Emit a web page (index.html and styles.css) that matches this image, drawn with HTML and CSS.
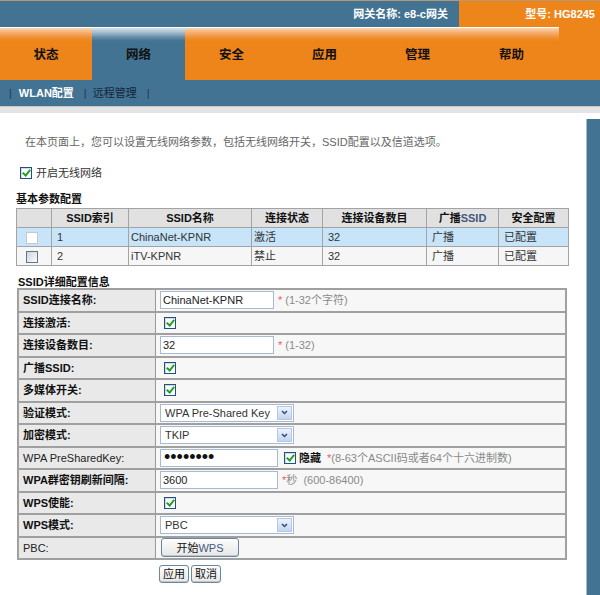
FILE: index.html
```html
<!DOCTYPE html>
<html lang="zh-CN">
<head>
<meta charset="utf-8">
<title>WLAN配置</title>
<link rel="stylesheet" href="styles.css">
</head>
<body>
<header class="top">
  <div class="gw">网关名称: e8-c网关</div>
  <div class="model">型号: HG8245</div>
</header>
<nav class="tabs">
  <a class="tab">状态</a>
  <a class="tab active">网络</a>
  <a class="tab">安全</a>
  <a class="tab">应用</a>
  <a class="tab">管理</a>
  <a class="tab">帮助</a>
</nav>
<nav class="subnav">
  <span class="sep">|</span><a class="sub cur">WLAN配置</a><span class="sep">|</span><a class="sub">远程管理</a><span class="sep">|</span>
</nav>
<div class="band"></div>
<div class="main">
  <div class="content">
    <p class="intro">在本页面上，您可以设置无线网络参数，包括无线网络开关，SSID配置以及信道选项。</p>
    <div class="enable"><span class="cb on"></span><span>开启无线网络</span></div>
    <h3 class="title">基本参数配置</h3>
    <table class="list">
      <colgroup>
        <col class="c1"><col class="c2"><col class="c3"><col class="c4"><col class="c5"><col class="c6"><col class="c7">
      </colgroup>
      <tr class="head"><th></th><th>SSID索引</th><th>SSID名称</th><th>连接状态</th><th>连接设备数目</th><th>广播<span class="sl">SSID</span></th><th>安全配置</th></tr>
      <tr class="sel-row"><td class="chk"><span class="cb lite"></span></td><td>1</td><td class="tight">ChinaNet-KPNR</td><td class="tight">激活</td><td>32</td><td>广播</td><td>已配置</td></tr>
      <tr class="plain"><td class="chk"><span class="cb off"></span></td><td>2</td><td class="tight">iTV-KPNR</td><td class="tight">禁止</td><td>32</td><td>广播</td><td>已配置</td></tr>
    </table>
    <h3 class="title t2">SSID详细配置信息</h3>
    <div class="form">
      <div class="k">SSID连接名称:</div>
      <div class="v"><input class="txt" value="ChinaNet-KPNR"><span class="req">*</span><span class="hint">(1-32个字符)</span></div>

      <div class="k">连接激活:</div>
      <div class="v"><span class="cb on ind"></span></div>

      <div class="k">连接设备数目:</div>
      <div class="v"><input class="txt" value="32"><span class="req">*</span><span class="hint">(1-32)</span></div>

      <div class="k">广播SSID:</div>
      <div class="v"><span class="cb on ind"></span></div>

      <div class="k">多媒体开关:</div>
      <div class="v"><span class="cb on ind"></span></div>

      <div class="k">验证模式:</div>
      <div class="v"><div class="sel"><span class="val">WPA Pre-Shared Key</span><span class="arr"><svg width="7" height="5" viewBox="0 0 7 5"><path d="M1 1 L3.5 3.5 L6 1" fill="none" stroke="#2c4c8c" stroke-width="1.5"/></svg></span></div></div>

      <div class="k">加密模式:</div>
      <div class="v"><div class="sel"><span class="val">TKIP</span><span class="arr"><svg width="7" height="5" viewBox="0 0 7 5"><path d="M1 1 L3.5 3.5 L6 1" fill="none" stroke="#2c4c8c" stroke-width="1.5"/></svg></span></div></div>

      <div class="k n">WPA PreSharedKey:</div>
      <div class="v"><input class="txt w pw" value="••••••••"><span class="cb on gap"></span><b class="hide">隐藏</b><span class="req far">*</span><span class="hint tight">(8-63个ASCII码或者64个十六进制数)</span></div>

      <div class="k">WPA群密钥刷新间隔:</div>
      <div class="v"><input class="txt w" value="3600"><span class="req">*</span><span class="hint tight">秒&nbsp;&nbsp;(600-86400)</span></div>

      <div class="k">WPS使能:</div>
      <div class="v"><span class="cb on ind"></span></div>

      <div class="k">WPS模式:</div>
      <div class="v"><div class="sel"><span class="val">PBC</span><span class="arr"><svg width="7" height="5" viewBox="0 0 7 5"><path d="M1 1 L3.5 3.5 L6 1" fill="none" stroke="#2c4c8c" stroke-width="1.5"/></svg></span></div></div>

      <div class="k n">PBC:</div>
      <div class="v"><button class="btn wps">开始<span class="sl">WPS</span></button></div>
    </div>
    <div class="actions"><button class="btn">应用</button><button class="btn">取消</button></div>
  </div>
  <div class="rail"></div>
</div>
</body>
</html>
```
FILE: styles.css
```css
* { box-sizing: border-box; }
html, body { margin: 0; padding: 0; }
body {
  width: 600px;
  height: 595px;
  overflow: hidden;
  background: #fff;
  font-family: "Liberation Sans", "Noto Sans CJK SC", sans-serif;
  font-size: 11px;
  line-height: 14px;
  color: #222;
}

/* header */
.top { display: flex; height: 27px; border-top: 1px solid #b7997a; }
.gw, .model { color: #fff; font-weight: bold; text-align: right; line-height: 26px; }
.gw { width: 459px; background: #437393; padding-right: 11px; }
.model { flex: 1; background: #ee851b; padding-right: 5px; }

/* main tabs */
.tabs {
  display: grid;
  grid-template-columns: 92px repeat(4, 93px) 95px;
  height: 53px;
  background: #ee851b;
}
.tab {
  display: flex;
  align-items: center;
  justify-content: center;
  padding-top: 3px;
  font-size: 12.5px;
  font-weight: bold;
  color: #111;
  background: linear-gradient(#fff 0, #fff 1px, #f9d4b1 1px, #f4ac6c 6px, #ef8e2c 11px, #ee851b 14px);
}
.tab.active {
  background: linear-gradient(#fff 0, #fff 1px, #d7e2ea 1px, #9db7c9 6px, #5a85a2 11px, #437393 14px);
}

/* sub nav */
.subnav { display: flex; align-items: center; height: 26px; background: #437393; padding-left: 9px; }
.sep { color: #2d2b6c; }
.sub { margin: 0 10px 0 7px; color: #15253a; }
.sub + .sep + .sub { margin-left: 6px; }
.sub.cur { color: #fff; font-weight: bold; }

.band { height: 7px; background: #e4e4e4; border-top: 1px solid #c6c6c6; }

.main { display: flex; height: 482px; }
.content { width: 586px; }
.rail { width: 14px; margin-top: 6px; background: #437393; border-left: 1px solid #a8bccb; }

.intro { margin: 22px 0 0 25px; color: #666; }
.enable { display: flex; align-items: center; gap: 4px; height: 14px; margin: 17px 0 0 20px; color: #333; }

.title { margin: 13px 0 0 16px; font-size: 11px; font-weight: bold; line-height: 12px; color: #111; }
.title.t2 { margin: 10px 0 0 18px; }

/* checkbox */
.cb {
  position: relative;
  display: inline-block;
  flex: none;
  width: 12px;
  height: 12px;
  border: 1px solid #1e5286;
  background: #fff;
  box-shadow: inset 1px 1px 0 #d8d8d8;
}
.cb.on::after {
  content: "";
  position: absolute;
  left: 3px;
  top: 0;
  width: 3px;
  height: 6px;
  border: solid #22a022;
  border-width: 0 2px 2px 0;
  transform: rotate(40deg);
}
.cb.lite { border-color: #c8c8c8; box-shadow: none; }
.cb.off { border-color: #5a7896; background: linear-gradient(135deg, #d4d4d4, #fbfbfb); box-shadow: none; }
.cb.ind { margin-left: 4px; }
.cb.gap { margin-left: 6px; }

/* list table */
.list {
  margin: 3px 0 0 16px;
  width: 552px;
  border-collapse: collapse;
  table-layout: fixed;
}
.c1 { width: 35px; } .c2 { width: 77px; } .c3 { width: 123px; } .c4 { width: 71px; }
.c5 { width: 104px; } .c6 { width: 72px; } .c7 { width: 70px; }
.list tr { height: 19px; }
.list th, .list td { border: 1px solid #a3a3a3; padding: 0 0 0 5px; line-height: 14px; white-space: nowrap; }
.list th { background: #e1e1e1; font-weight: bold; text-align: center; color: #111; padding: 0; }
.list .sel-row td { background: #c7e4f9; }
.list .plain td { background: #f6f6f6; }
.list td { color: #333; }
.list td.tight { padding-left: 2px; }
.list td.chk { padding-left: 9px; }
.list td.chk .cb { vertical-align: middle; }
.sl { color: #44587c; }

/* form grid */
.form {
  display: grid;
  grid-template-columns: 137px 1fr;
  grid-auto-rows: 22.5px;
  width: 550px;
  margin-left: 17px;
  border: 2px solid #a0a0a0;
  border-bottom: 0;
}
.k, .v { display: flex; align-items: center; border-bottom: 2px solid #a0a0a0; }
.k { background: #e9e9e9; border-right: 1px solid #9a9a9a; padding-left: 4px; font-weight: bold; color: #111; white-space: nowrap; }
.k.n { font-weight: normal; color: #222; }
.v { background: #f7f7f7; padding-left: 4px; }

.txt {
  width: 114px;
  height: 18px;
  margin: 0;
  padding: 0 2px;
  border: 1px solid #a6bad3;
  background: #fff;
  font: inherit;
  font-size: 11px;
  color: #222;
}
.txt.w { width: 118px; }
.txt.pw { font-size: 18px; padding-left: 3px; color: #111; }
.req { color: #e5605f; margin-left: 4px; }
.req.far { margin-left: 6px; }
.hint { color: #8a8a8a; margin-left: 3px; }
.hint.tight { margin-left: 0; }
.hide { margin-left: 3px; color: #111; }

.sel {
  display: flex;
  width: 134px;
  height: 18px;
  border: 1px solid #a6bad3;
  background: #fff;
}
.sel .val { flex: 1; padding-left: 4px; line-height: 16px; color: #333; }
.sel .arr {
  display: flex;
  align-items: center;
  justify-content: center;
  width: 15px;
  margin: 1px;
  border: 1px solid #b6c7e0;
  background: linear-gradient(#eef3fb, #c3d4ee);
}

.btn {
  height: 18px;
  margin: 0;
  padding: 0;
  border: 1px solid #67889f;
  border-radius: 3px;
  background: linear-gradient(#fdfdfd, #e7e7e7);
  box-shadow: inset 0 -1px 0 #c4c4c4;
  font: inherit;
  font-size: 11px;
  color: #111;
}
.btn.wps { width: 78px; height: 19px; margin-left: 1px; }
.actions { display: flex; gap: 2px; margin: 5px 0 0 159px; }
.actions .btn { width: 30px; }
```
